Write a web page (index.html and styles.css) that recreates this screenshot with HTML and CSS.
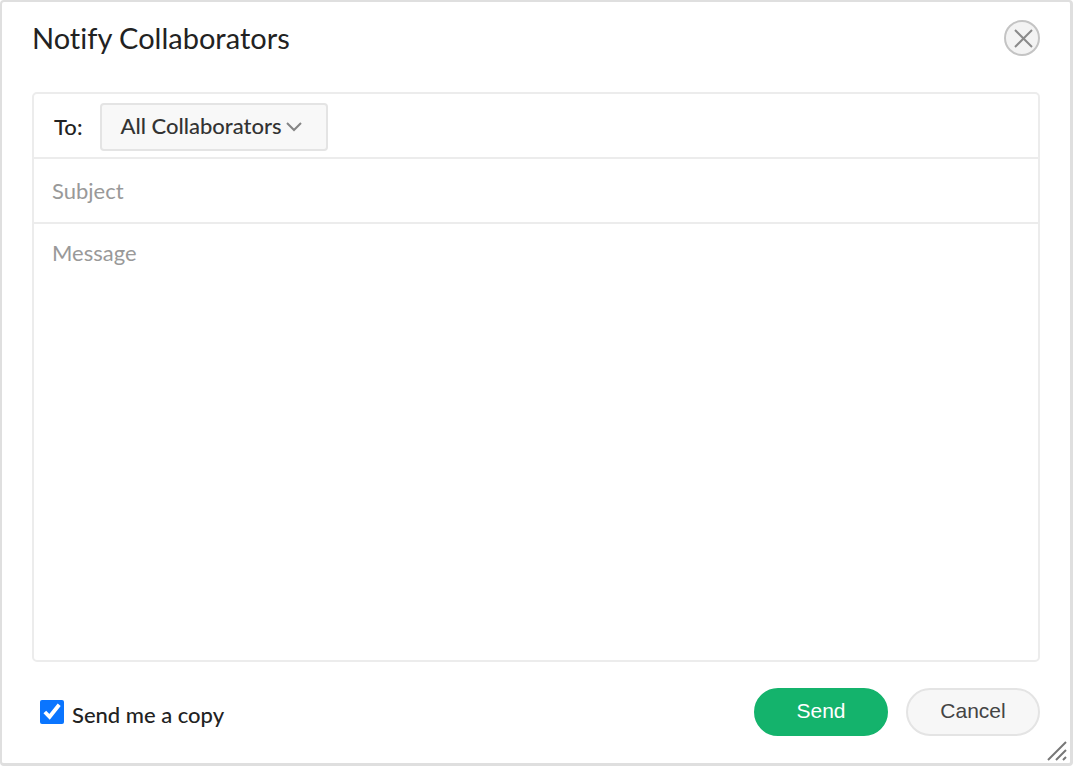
FILE: index.html
```html
<!DOCTYPE html>
<html lang="en">
<head>
<meta charset="utf-8">
<meta name="viewport" content="width=device-width, initial-scale=1">
<title>Notify Collaborators</title>
<link rel="stylesheet" href="styles.css">
</head>
<body>
<form class="dialog" role="dialog" aria-labelledby="dialog-title">
  <header class="dialog-header">
    <h1 class="dialog-title" id="dialog-title">Notify Collaborators</h1>
    <button class="close" type="button" aria-label="Close">
      <svg viewBox="0 0 36 36" aria-hidden="true">
        <circle cx="18" cy="18" r="17" fill="#f3f3f3" stroke="#c4c4c4" stroke-width="2"/>
        <path d="M11 10l17 17M28 10L11 27" fill="none" stroke="#8a8a8a" stroke-width="2"/>
      </svg>
    </button>
  </header>

  <div class="fields">
    <div class="recipients">
      <label class="recipients-label" for="to">To:</label>
      <div class="picker">
        <select class="picker-select" id="to">
          <option>All Collaborators</option>
        </select>
        <svg class="picker-arrow" viewBox="0 0 16 10" aria-hidden="true">
          <path d="M1 1l7 7 7-7" fill="none" stroke="#858585" stroke-width="2"/>
        </svg>
      </div>
    </div>
    <input class="subject" type="text" placeholder="Subject" aria-label="Subject">
    <textarea class="message" placeholder="Message" aria-label="Message"></textarea>
  </div>

  <footer class="dialog-footer">
    <label class="copy">
      <input class="copy-box" type="checkbox" checked>
      <span class="copy-text">Send me a copy</span>
    </label>
    <div class="actions">
      <button class="button button-primary" type="submit">Send</button>
      <button class="button" type="button">Cancel</button>
    </div>
  </footer>

  <svg class="grip" viewBox="0 0 20 20" aria-hidden="true">
    <path d="M1 19L19 1M9 19L19 9M16 19l3-3" fill="none" stroke="#777" stroke-width="2"/>
  </svg>
</form>
</body>
</html>
```
FILE: styles.css
```css
* {
  box-sizing: border-box;
}

body {
  margin: 0;
  padding: 0 4px 4px 0;
  min-height: 100vh;
  display: flex;
  background: #fff;
  font-family: Lato, sans-serif;
  font-size: 22px;
  font-weight: 500;
  font-variant-ligatures: none;
  color: #222;
}

.dialog {
  position: relative;
  flex: 1;
  display: flex;
  flex-direction: column;
  padding: 16px 30px 27px;
  background: #fff;
  border: 3px solid #dfdfdf;
  border-top-width: 2px;
  border-left-width: 2px;
  border-radius: 4px;
}

.dialog-header {
  display: flex;
  align-items: center;
  justify-content: space-between;
  height: 40px;
  margin-bottom: 34px;
}

.dialog-title {
  margin: 0;
  font-size: 29px;
  font-weight: 400;
  line-height: 36px;
}

.close {
  width: 36px;
  height: 36px;
  margin: 0;
  padding: 0;
  border: 0;
  border-radius: 50%;
  background: none;
}

.close svg {
  display: block;
}

.fields {
  flex: 1;
  display: flex;
  flex-direction: column;
  border: 2px solid #ececec;
  border-radius: 5px;
}

.recipients {
  display: flex;
  align-items: center;
  gap: 18px;
  height: 65px;
  padding: 2px 20px 0;
  border-bottom: 2px solid #ececec;
}

.picker {
  position: relative;
}

.picker-select {
  appearance: none;
  display: block;
  width: 228px;
  height: 48px;
  margin: 0;
  padding: 0 44px 2px 18px;
  border: 2px solid #e4e4e4;
  border-radius: 4px;
  background: #f8f8f8;
  color: #333;
  font: inherit;
}

.picker-arrow {
  position: absolute;
  top: 19px;
  right: 26px;
  width: 16px;
  height: 10px;
  pointer-events: none;
}

.subject,
.message {
  width: 100%;
  margin: 0;
  border: 0;
  background: none;
  color: #222;
  font: inherit;
  font-weight: 400;
  line-height: 28px;
}

.subject {
  height: 65px;
  padding: 0 18px;
  border-bottom: 2px solid #ececec;
}

.message {
  flex: 1;
  display: block;
  padding: 15px 18px;
  resize: none;
}

.subject::placeholder,
.message::placeholder {
  color: #999;
  opacity: 1;
}

.dialog-footer {
  display: flex;
  align-items: center;
  justify-content: space-between;
  height: 48px;
  margin-top: 26px;
}

.copy {
  display: flex;
  align-items: center;
  gap: 8px;
  padding-left: 8px;
}

.copy-box {
  width: 24px;
  height: 24px;
  margin: 0;
  accent-color: #0a75ff;
}

.copy-text {
  padding-top: 5px;
}

.actions {
  display: flex;
  gap: 18px;
}

.button {
  width: 134px;
  height: 48px;
  padding: 0 0 2px;
  border: 2px solid #e4e4e4;
  border-radius: 24px;
  background: #f7f7f7;
  color: #444;
  font-family: "Liberation Sans", Arial, sans-serif;
  font-size: 21px;
}

.button-primary {
  border-color: #14b36c;
  background: #14b36c;
  color: #fff;
}

.grip {
  position: absolute;
  right: 3px;
  bottom: 2px;
  width: 20px;
  height: 20px;
}
```
